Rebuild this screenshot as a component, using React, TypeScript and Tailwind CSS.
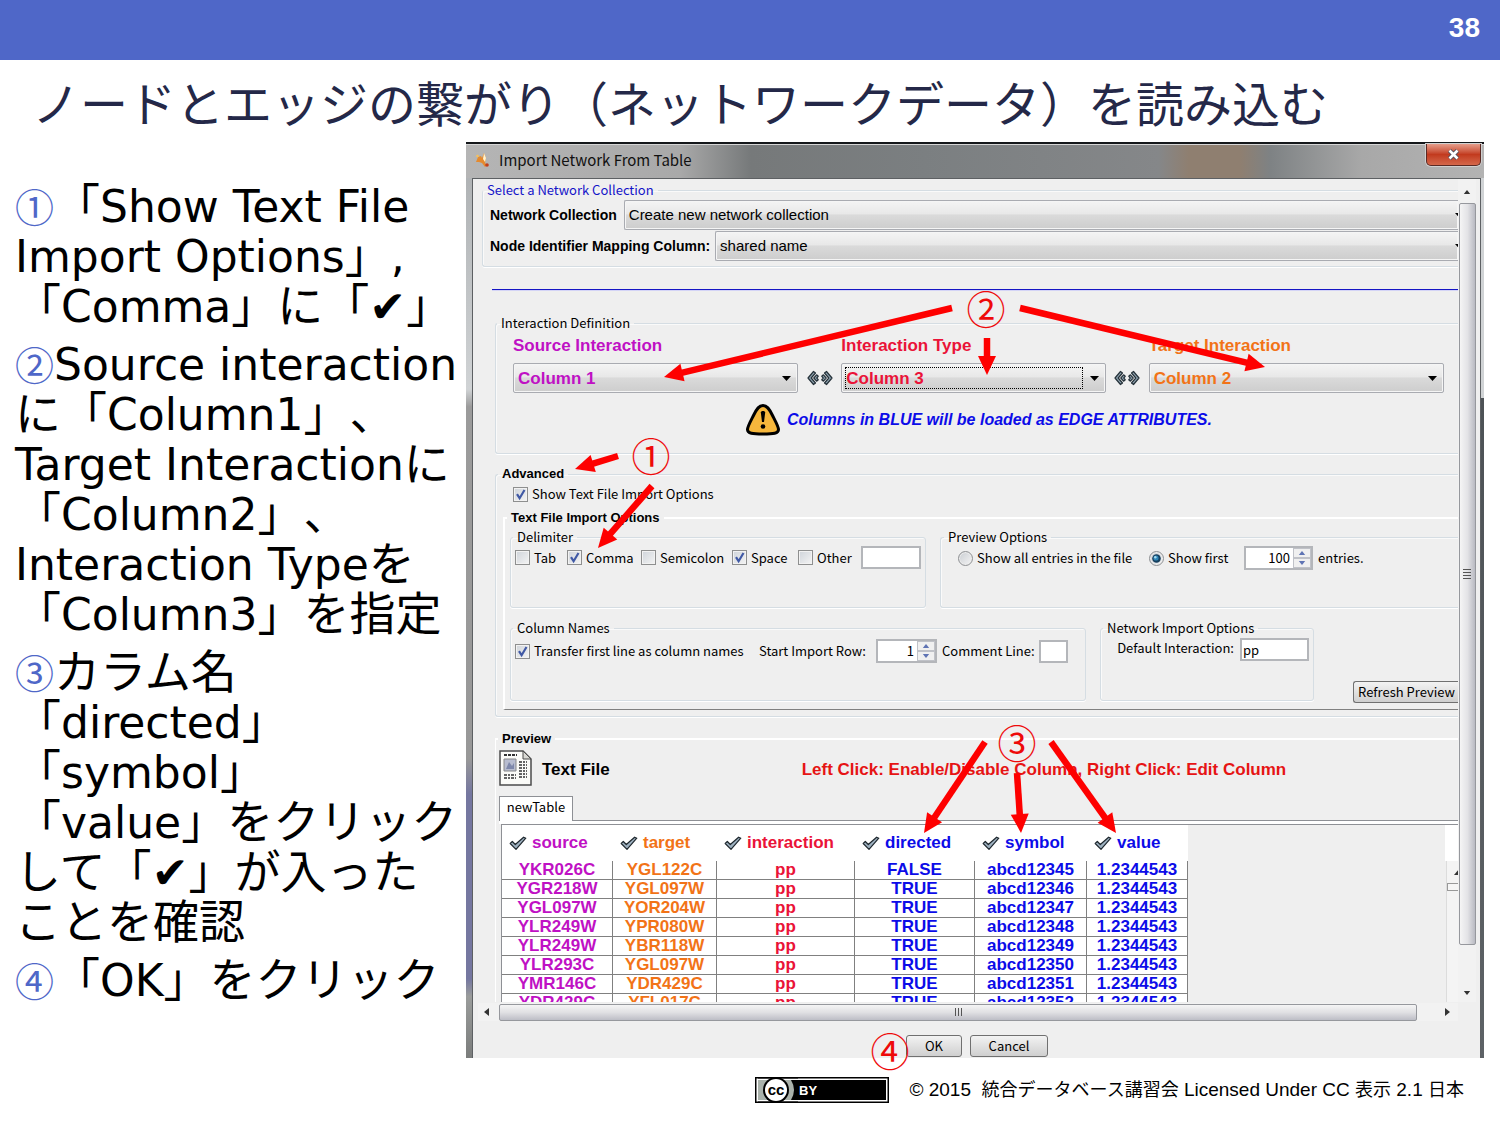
import React from "react";

const UI = "font-['Noto_Sans_CJK_JP','Noto_Sans',sans-serif]";
const ARIAL = "font-['Liberation_Sans',Arial,sans-serif]";

function Group({
  legend,
  legendClass = "ml-[2px]",
  className = "",
  children,
}: {
  legend: string;
  legendClass?: string;
  className?: string;
  children: React.ReactNode;
}) {
  return (
    <fieldset className={"min-w-0 rounded-[3px] border-solid " + className}>
      <legend className={"h-4 px-1 text-[13px] leading-4 whitespace-nowrap " + legendClass}>{legend}</legend>
      {children}
    </fieldset>
  );
}

const etched = "border border-[#d5dde3] shadow-[inset_1px_1px_0_#fafafa,0_1px_0_#fff]";

function Combo({
  label,
  value,
  options,
  className = "",
  focused = false,
  cut = false,
}: {
  label: string;
  value: string;
  options: string[];
  className?: string;
  focused?: boolean;
  cut?: boolean;
}) {
  return (
    <div
      className={
        "relative h-[30px] min-w-0 rounded-[2px] border border-[#a9abb1] bg-[linear-gradient(#f4f4f4,#e8e8e8_46%,#dadada_50%,#cdcdcd)] shadow-[inset_0_0_0_1px_#f5f5f5] " +
        (cut ? "rounded-r-none border-r-0 " : "") +
        className
      }
    >
      <select
        aria-label={label}
        defaultValue={value}
        className={
          "block h-full w-full appearance-none truncate bg-transparent pt-px pl-1 outline-none " +
          (cut ? "pr-1" : "pr-6")
        }
      >
        {options.map((o) => (
          <option key={o}>{o}</option>
        ))}
      </select>
      {focused && (
        <span className="pointer-events-none absolute inset-y-[3px] left-[3px] right-[22px] border border-dotted border-black" />
      )}
      <svg
        className={"pointer-events-none absolute top-[12px] h-[5px] w-[9px] " + (cut ? "-right-[6px]" : "right-[6px]")}
        viewBox="0 0 9 5"
      >
        <path d="M0 0h9L4.5 5z" fill="#000" />
      </svg>
    </div>
  );
}

function Check({ label, checked = false, className = "" }: { label: string; checked?: boolean; className?: string }) {
  return (
    <label className={"flex items-center gap-1 whitespace-nowrap " + className}>
      <span className="relative block h-[15px] w-[15px] shrink-0">
        <input
          type="checkbox"
          defaultChecked={checked}
          className="block h-[15px] w-[15px] appearance-none border border-[#8e8f8f] bg-linear-to-br from-[#cfd4da] to-[#f4f4f4] shadow-[inset_0_0_0_1px_#f2f2f2]"
        />
        {checked && (
          <svg viewBox="0 0 15 15" className="pointer-events-none absolute inset-0">
            <path d="M4 7.2l2.6 4L11.5 3" fill="none" stroke="#4059a5" strokeWidth="2.2" />
          </svg>
        )}
      </span>
      {label}
    </label>
  );
}

function Radio({ label, checked = false, className = "" }: { label: string; checked?: boolean; className?: string }) {
  return (
    <label className={"flex items-center gap-1 whitespace-nowrap " + className}>
      <span className="relative block h-[15px] w-[15px]">
        <input
          type="radio"
          name="entries"
          defaultChecked={checked}
          className="block h-[15px] w-[15px] appearance-none rounded-full border border-[#8e9093] bg-linear-to-br from-[#c9cdd2] to-[#f5f5f5] shadow-[inset_0_0_0_1px_#ededed]"
        />
        {checked && (
          <svg viewBox="0 0 15 15" className="pointer-events-none absolute inset-0">
            <circle cx="7.5" cy="7.5" r="4.3" fill="#17405f" />
            <circle cx="7" cy="7" r="2.6" fill="#2f86b8" />
            <circle cx="6.3" cy="6.2" r="1.2" fill="#a5dcf2" />
          </svg>
        )}
      </span>
      {label}
    </label>
  );
}

function Spinner({ label, value, className }: { label: string; value: string; className: string }) {
  return (
    <div className={"flex h-[24px] border-2 border-[#b4b6ba] bg-white " + className}>
      <input aria-label={label} defaultValue={value} className="w-0 min-w-0 flex-1 bg-white pr-[3px] text-right outline-none" />
      <div className="flex w-[18px] flex-col">
        <button aria-label={label + " up"} className="flex flex-1 items-center justify-center border border-[#c0c2c8] bg-[#f0f0f0]">
          <svg viewBox="0 0 8 5" className="h-1 w-2">
            <path d="M0 5h8L4 0z" fill="#5f74b4" />
          </svg>
        </button>
        <button aria-label={label + " down"} className="flex flex-1 items-center justify-center border border-[#c0c2c8] bg-[#f0f0f0]">
          <svg viewBox="0 0 8 5" className="h-1 w-2">
            <path d="M0 0h8L4 5z" fill="#5f74b4" />
          </svg>
        </button>
      </div>
    </div>
  );
}

function Chevrons() {
  return (
    <>
      <path d="M6.5 1.5l2 1.5L4.2 8l4.300 5-2 1.500L1 8z" />
      <path d="M9.600 4.800l1.700 1.400L9.800 8l1.500 1.800-1.700 1.400L6.800 8z" />
    </>
  );
}

function Exchange() {
  return (
    <svg viewBox="0 0 26 16" className="h-4 w-[26px] justify-self-center">
      <g fill="#8fa3b0" stroke="#26323a" strokeWidth="1.2" strokeLinejoin="round">
        <Chevrons />
        <g transform="matrix(-1 0 0 1 26 0)">
          <Chevrons />
        </g>
      </g>
    </svg>
  );
}

function HeadCheck() {
  return (
    <svg viewBox="0 0 18 15" className="h-[15px] w-[18px] shrink-0">
      <path
        d="M1.200 7.500L3.300 5.500l3 3L14.600 1.200l2.200 1L7 13.300z"
        fill="#9db0bf"
        stroke="#1e272d"
        strokeWidth="1.200"
        strokeLinejoin="round"
      />
    </svg>
  );
}

const columns = [
  { name: "source", head: "text-[#bf11c4]", w: "w-[111px]" },
  { name: "target", head: "text-[#f27317]", w: "w-[104px]" },
  { name: "interaction", head: "text-[#ea1338]", w: "w-[138px]" },
  { name: "directed", head: "text-[#0c0ce8]", w: "w-[120px]" },
  { name: "symbol", head: "text-[#0c0ce8]", w: "w-[112px]" },
  { name: "value", head: "text-[#0c0ce8]", w: "w-[101px]" },
];

const rows = [
  ["YKR026C", "YGL122C", "pp", "FALSE", "abcd12345", "1.2344543"],
  ["YGR218W", "YGL097W", "pp", "TRUE", "abcd12346", "1.2344543"],
  ["YGL097W", "YOR204W", "pp", "TRUE", "abcd12347", "1.2344543"],
  ["YLR249W", "YPR080W", "pp", "TRUE", "abcd12348", "1.2344543"],
  ["YLR249W", "YBR118W", "pp", "TRUE", "abcd12349", "1.2344543"],
  ["YLR293C", "YGL097W", "pp", "TRUE", "abcd12350", "1.2344543"],
  ["YMR146C", "YDR429C", "pp", "TRUE", "abcd12351", "1.2344543"],
  ["YDR429C", "YFL017C", "pp", "TRUE", "abcd12352", "1.2344543"],
];

const arrows: [number, number, number, number][] = [
  [952, 308, 664, 377],
  [1020, 308, 1265, 367],
  [987, 338, 987, 375],
  [618, 456, 575, 469],
  [652, 486, 598, 548],
  [985, 742, 924, 833],
  [1017, 773, 1021, 833],
  [1051, 742, 1116, 833],
];

const marks: [string, number, number][] = [
  ["②", 986, 310],
  ["①", 651, 457],
  ["③", 1017, 744],
  ["④", 890, 1052],
];

function Annotations() {
  return (
    <svg viewBox="466 142 1018 916" className="pointer-events-none absolute -top-[2px] left-0 h-[916px] w-[1018px] overflow-visible">
      {arrows.map(([x1, y1, x2, y2], i) => {
        const d = Math.hypot(x2 - x1, y2 - y1);
        const ux = (x2 - x1) / d;
        const uy = (y2 - y1) / d;
        const bx = x2 - ux * 19;
        const by = y2 - uy * 19;
        return (
          <g key={i} fill="#fe0000" stroke="none">
            <path d={`M${x1} ${y1}L${bx + ux} ${by + uy}`} stroke="#fe0000" strokeWidth="6.500" />
            <path d={`M${x2} ${y2}L${bx - uy * 9} ${by + ux * 9}L${bx + uy * 9} ${by - ux * 9}z`} />
          </g>
        );
      })}
      {marks.map(([m, x, y]) => (
        <text
          key={m}
          x={x}
          y={y + 14}
          textAnchor="middle"
          fill="#ee0a0a"
          className="font-['Noto_Sans_CJK_JP',sans-serif] text-[39px]"
        >
          {m}
        </text>
      ))}
    </svg>
  );
}

const steps = [
  { mark: "①", lines: ["「Show Text File", "Import Options」,", "「Comma」に「✔」"] },
  {
    mark: "②",
    lines: [
      "Source interaction",
      "に「Column1」、",
      "Target Interactionに",
      "「Column2」、",
      "Interaction Typeを",
      "「Column3」を指定",
    ],
  },
  {
    mark: "③",
    lines: ["カラム名", "「directed」", "「symbol」", "「value」をクリック", "して「✔」が入った", "ことを確認"],
  },
  { mark: "④", lines: ["「OK」をクリック"] },
];

/* Japanese runs are set slightly larger than the Latin text beside them. */
function Line({ text }: { text: string }) {
  return (
    <>
      {text.split(/([\u3000-\u9fff]+)/).map((run, i) =>
        i % 2 ? (
          <span key={i} className="text-[46px] leading-none">
            {run}
          </span>
        ) : (
          run
        ),
      )}
    </>
  );
}

function Item({ mark, lines }: { mark: string; lines: string[] }) {
  return (
    <li>
      <span className="font-['Noto_Sans_CJK_JP',sans-serif] text-[39px] leading-none text-[#4f67c8]">{mark}</span>
      {lines.map((l, i) => (
        <React.Fragment key={l}>
          {i > 0 && <br />}
          <Line text={l} />
        </React.Fragment>
      ))}
    </li>
  );
}

function Dialog() {
  return (
    <section
      aria-label="Import Network From Table"
      className="relative flex min-w-0 flex-1 flex-col self-start border-t-2 border-[#14171a] bg-[#999b9d]"
    >
      <header className="flex h-[34px] items-start bg-[linear-gradient(90deg,#b5b5b5,#a9a9a9_21%,#76797a_28%,#7b7f81_45%,#858789_68%,#8f7f70_71%,#8f7f70_76%,#7e8284_79%,#a8a8a8_88%,#b3b3b3)] shadow-[inset_0_1px_0_#d6d6d6]">
        <div className={"flex h-8 items-center gap-2 pl-[9px] text-[15px] text-[#111] " + UI}>
          <svg viewBox="0 0 16 16" className="h-4 w-4">
            <path d="M3 5l3-1 1 2 2-5 2 5-1 5 2 2-2 2-3-4-3-1-3 0z" fill="#e58a2e" />
            <path d="M9 1l2 5-1 4-2-3z" fill="#fff3cf" />
            <circle cx="12" cy="13" r="1.800" fill="#c33f1c" />
            <circle cx="2.500" cy="4" r="1.300" fill="#f6c15b" />
          </svg>
          Import Network From Table
        </div>
        <button
          aria-label="Close"
          className="mr-[3px] ml-auto flex h-[22px] w-[55px] items-center justify-center rounded-b-[5px] border border-t-0 border-[#5b2a24] bg-linear-to-b from-[#e59d8b] from-0% via-[#c23a1e] via-50% to-[#d4674a] shadow-[0_0_0_1px_#d0d0d0]"
        >
          <svg viewBox="0 0 13 11" className="h-[11px] w-[13px]">
            <path d="M2.500 1.500l8 8M10.500 1.500l-8 8" stroke="#4c4f5e" strokeWidth="4.400" />
            <path d="M2.500 1.500l8 8M10.500 1.500l-8 8" stroke="#fff" strokeWidth="2.600" />
          </svg>
        </button>
      </header>

      <div className="flex flex-1">
        <div className="w-[6px] shrink-0 bg-[linear-gradient(#b0b3b5,#d0d3d5_24%,#9b9b9b_26%,#989898_66%,#7577a0_70%,#7577a0_91%,#9a9c9b_93%,#7b7d7c)]" />
        <div
          className={
            "min-w-0 flex-1 border border-b-0 border-[#5d6063] bg-[#efefef] pl-px text-[13px] text-black " + UI
          }
        >
          <div className="flex pr-1">
            <div className="min-w-0 flex-1 overflow-hidden pt-[3px]">
              <Group
                legend="Select a Network Collection"
                legendClass="ml-0 text-[#1414c8]"
                className={"ml-2 rounded-r-none border-r-0 " + etched}
              >
                <div className={"pt-[2px] pb-1 pl-[7px] text-[15px] " + ARIAL}>
                  <div className="flex h-[31px] gap-[7px]">
                    <span className="self-center text-[14px] font-bold whitespace-nowrap">Network Collection</span>
                    <Combo
                      cut
                      className="flex-1"
                      label="Network Collection"
                      value="Create new network collection"
                      options={["Create new network collection"]}
                    />
                  </div>
                  <div className="flex h-[31px] gap-[5px]">
                    <span className="self-center text-[14px] font-bold whitespace-nowrap">Node Identifier Mapping Column:</span>
                    <Combo
                      cut
                      className="flex-1"
                      label="Node Identifier Mapping Column"
                      value="shared name"
                      options={["shared name"]}
                    />
                  </div>
                </div>
              </Group>

              <div role="separator" className="mt-[22px] mb-[25px] ml-[18px] h-px bg-[#1414c4] shadow-[0_1px_0_#d4d4f6]" />

              <Group legend="Interaction Definition" legendClass="ml-[1px]" className={"ml-[21px] rounded-r-none border-r-0 " + etched}>
                <div className={"pt-[5px] pr-[14px] pb-4 pl-[17px] text-[17px] font-bold " + ARIAL}>
                  <div className="grid grid-cols-[286fr_43px_265fr_43px_296fr] leading-5">
                    <span className="text-[#bf11c4]">Source Interaction</span>
                    <span />
                    <span className="text-[#ea1338]">Interaction Type</span>
                    <span />
                    <span className="text-[#f27317]">Target Interaction</span>
                  </div>
                  <div className="mt-[7px] grid grid-cols-[286fr_43px_265fr_43px_296fr] items-center">
                    <Combo
                      className="text-[#bf11c4]"
                      label="Source Interaction"
                      value="Column 1"
                      options={["Column 1", "Column 2", "Column 3"]}
                    />
                    <Exchange />
                    <Combo
                      focused
                      className="text-[#ea1338]"
                      label="Interaction Type"
                      value="Column 3"
                      options={["Column 1", "Column 2", "Column 3"]}
                    />
                    <Exchange />
                    <Combo
                      className="text-[#f27317]"
                      label="Target Interaction"
                      value="Column 2"
                      options={["Column 1", "Column 2", "Column 3"]}
                    />
                  </div>
                  <div className="mt-[10px] flex items-center justify-center gap-[6px]">
                    <svg viewBox="0 0 36 34" className="h-[34px] w-9">
                      <path
                        d="M18 2.500c4 0 6 3 9 9s6.500 12 6.500 15c0 4-5 4.500-15.500 4.500S2.500 30.500 2.500 26.500c0-3 3.500-9 6.500-15s5-9 9-9z"
                        fill="#f6b73c"
                        stroke="#000"
                        strokeWidth="3"
                      />
                      <path d="M15.800 9.500c0-2 4.400-2 4.400 0l-1.200 9.500h-2z" />
                      <circle cx="18" cy="23.500" r="2.300" />
                    </svg>
                    <em className="text-[16px] whitespace-nowrap text-[#0c0ce8]">
                      Columns in BLUE will be loaded as EDGE ATTRIBUTES.
                    </em>
                  </div>
                </div>
              </Group>

              <Group
                legend="Advanced"
                legendClass={"ml-[2px] text-[13px] font-bold " + ARIAL}
                className={"mt-[12px] ml-[21px] rounded-r-none border-r-0 " + etched}
              >
                <div className="pt-[3px] pb-[6px] pl-[7px]">
                  <Check label="Show Text File Import Options" checked className="h-[18px] pl-[10px]" />
                  <Group
                    legend="Text File Import Options"
                    legendClass={"ml-[2px] text-[13px] font-bold " + ARIAL}
                    className="mt-[7px] rounded-none border-2 border-r-0 border-b border-white border-b-[#808080]"
                  >
                    <div className="pt-[3px] pb-2 pl-[5px]">
                      <div className="flex gap-[14px]">
                        <Group legend="Delimiter" className={"w-[416px] shrink-0 " + etched}>
                          <div className="flex items-center pt-px pr-1 pb-[38px] pl-1">
                            <Check label="Tab" className="w-[52px]" />
                            <Check label="Comma" checked className="w-[74px]" />
                            <Check label="Semicolon" className="w-[91px]" />
                            <Check label="Space" checked className="w-[66px]" />
                            <Check label="Other" />
                            <input
                              aria-label="Other delimiter"
                              className="ml-auto h-[23px] w-[60px] border-2 border-[#b4b6ba] bg-white outline-none"
                            />
                          </div>
                        </Group>
                        <Group legend="Preview Options" legendClass="ml-[3px]" className={"flex-1 rounded-r-none border-r-0 " + etched}>
                          <div className="flex items-center pt-px pb-[37px] pl-[17px]">
                            <Radio label="Show all entries in the file" className="w-[191px]" />
                            <Radio label="Show first" checked className="w-[95px]" />
                            <Spinner label="Entries" value="100" className="w-[69px]" />
                            <span className="ml-[5px]">entries.</span>
                          </div>
                        </Group>
                      </div>
                      <div className="mt-3 flex gap-[14px]">
                        <Group legend="Column Names" className={"w-[576px] shrink-0 " + etched}>
                          <div className="flex items-center pt-[3px] pb-[37px] pl-1 whitespace-nowrap">
                            <Check label="Transfer first line as column names" checked className="w-[244px]" />
                            <span className="w-[117px]">Start Import Row:</span>
                            <Spinner label="Start Import Row" value="1" className="w-[61px]" />
                            <label className="ml-[5px] flex items-center gap-1">
                              Comment Line:
                              <input className="h-[23px] w-[29px] border-2 border-[#b4b6ba] bg-white outline-none" />
                            </label>
                          </div>
                        </Group>
                        <Group legend="Network Import Options" className={"w-[214px] shrink-0 " + etched}>
                          <label className="flex justify-end gap-[6px] pt-[2px] pr-1 pb-[39px] whitespace-nowrap">
                            Default Interaction:
                            <input
                              defaultValue="pp"
                              className="h-[23px] w-[69px] border-2 border-[#b4b6ba] bg-white px-px outline-none"
                            />
                          </label>
                        </Group>
                        <button className="-mb-[2px] ml-auto h-[22px] self-end rounded-l-[3px] border border-r-0 border-[#707070] bg-linear-to-b from-[#f3f3f3] to-[#cfcfcf] pr-[3px] pl-1 leading-[18px] whitespace-nowrap">
                          Refresh Preview
                        </button>
                      </div>
                    </div>
                  </Group>
                </div>
              </Group>

              <Group
                legend="Preview"
                legendClass={"ml-[2px] text-[13px] font-bold " + ARIAL}
                className="mt-[14px] ml-[21px] rounded-none border-t-2 border-l border-white"
              >
                <div className={"flex items-center pt-[3px] pl-[3px] text-[17px] leading-6 font-bold " + ARIAL}>
                  <svg viewBox="0 0 33 36" className="h-9 w-[33px]">
                    <path d="M1 1h23l8 8v26H1z" fill="#fbfbf8" stroke="#4c4c4c" strokeWidth="1.500" />
                    <path d="M24 1v8h8z" fill="#d9d9d4" stroke="#4c4c4c" />
                    <path d="M5 5h13" stroke="#333" strokeWidth="2" strokeDasharray="3 1" />
                    <path d="M5 9h12v12H5z" fill="#b8bdd0" stroke="#888" />
                    <path d="M7 19l3-7 3 4 2-3v6z" fill="#7e88ab" />
                    <path d="M20 12h8M20 15h8M20 18h8M20 21h8M20 24h8M20 27h8M5 25h12M5 28h12" stroke="#333" strokeWidth="1.300" strokeDasharray="3 1 2 1" />
                  </svg>
                  <span className="pt-1 pl-[10px]">Text File</span>
                  <span className="pt-1 pl-[192px] whitespace-nowrap text-[#e61414]">
                    Left Click: Enable/Disable Column, Right Click: Edit Column
                  </span>
                </div>
                <div className="mt-[10px] flex pl-[3px]">
                  <button className="h-[25px] w-[74px] border border-b-0 border-[#8e9095] bg-white pb-1">newTable</button>
                  <div className="flex-1 border-b border-[#8e9095]" />
                </div>
                <div className="ml-[3px] h-[3px] bg-white" />
                <div className="ml-[5px] flex h-[178px] overflow-hidden border-t border-l border-[#8e9095]">
                  <table className={"w-[686px] table-fixed border-separate border-spacing-0 text-[17px] font-bold " + ARIAL}>
                    <thead>
                      <tr className="h-9 bg-white">
                        {columns.map((c) => (
                          <th key={c.name} className={"p-0 font-bold " + c.w + " " + c.head}>
                            <span className="flex items-center gap-[5px] pl-[7px]">
                              <HeadCheck />
                              {c.name}
                            </span>
                          </th>
                        ))}
                      </tr>
                    </thead>
                    <tbody>
                      {rows.map((r, i) => (
                        <tr key={i} className="bg-white">
                          {r.map((v, j) => (
                            <td
                              key={j}
                              className={
                                "h-[19px] border-r border-b border-[#808080] p-0 text-center leading-[18px] " + columns[j].head
                              }
                            >
                              {v}
                            </td>
                          ))}
                        </tr>
                      ))}
                    </tbody>
                  </table>
                  <div className="flex-1" />
                  <div className="w-[13px]">
                    <div className="h-9 bg-white" />
                    <div className="ml-px h-full border-l border-[#dcdcdc] bg-[#f4f4f4] pt-2 pl-[7px]">
                      <svg viewBox="0 0 5 6" className="h-[6px] w-[5px]">
                        <path d="M0 6L5 0v6z" fill="#333" />
                      </svg>
                      <div className="mt-2 -ml-[7px] h-2 border border-r-0 border-[#999] bg-[#f6f6f6]" />
                    </div>
                  </div>
                </div>
              </Group>
            </div>

            <div className="flex w-[18px] shrink-0 flex-col items-center bg-[#f2f2f2] pt-[11px] pb-[7px]">
              <svg viewBox="0 0 8 5" className="h-1 w-2">
                <path d="M0 5h8L4 0z" fill="#333" />
              </svg>
              <div className="mt-[9px] mb-[46px] flex w-[17px] flex-1 flex-col items-center justify-center gap-[2px] rounded-[2px] border border-[#96989d] bg-linear-to-r from-[#f5f5f5] via-[#e3e3e6] to-[#b9bac2]">
                <span className="h-px w-2 bg-[#555]" />
                <span className="h-px w-2 bg-[#555]" />
                <span className="h-px w-2 bg-[#555]" />
                <span className="h-px w-2 bg-[#555]" />
              </div>
              <svg viewBox="0 0 8 5" className="h-1 w-2">
                <path d="M0 0h8L4 5z" fill="#333" />
              </svg>
            </div>
          </div>

          <div className="mt-px mr-[22px] ml-1 flex h-[18px] items-center bg-[#f2f2f2] pl-[6px]">
            <svg viewBox="0 0 5 8" className="h-2 w-[5px]">
              <path d="M5 0v8L0 4z" fill="#333" />
            </svg>
            <div className="ml-[10px] flex h-[17px] flex-1 items-center justify-center gap-[2px] rounded-[2px] border border-[#96989d] bg-linear-to-b from-[#f5f5f5] via-[#e0e0e3] to-[#bdbec6]">
              <span className="h-2 w-px bg-[#555]" />
              <span className="h-2 w-px bg-[#555]" />
              <span className="h-2 w-px bg-[#555]" />
            </div>
            <svg viewBox="0 0 5 8" className="mr-2 ml-7 h-2 w-[5px]">
              <path d="M0 0v8l5-4z" fill="#333" />
            </svg>
          </div>

          <div className="mt-[14px] flex justify-center gap-2 pb-px">
            <button className="h-[22px] w-14 rounded-[3px] border border-[#707070] bg-linear-to-b from-[#f3f3f3] to-[#cfcfcf] leading-[18px]">
              OK
            </button>
            <button className="h-[22px] w-[78px] rounded-[3px] border border-[#707070] bg-linear-to-b from-[#f3f3f3] to-[#cfcfcf] leading-[18px]">
              Cancel
            </button>
          </div>
        </div>
        <div className="w-[3px] shrink-0 bg-[linear-gradient(#d0d3d5,#d0d3d5_25%,#4d5256_25%,#5d6266)]" />
      </div>
      <Annotations />
    </section>
  );
}

export default function App() {
  return (
    <div className="min-h-screen bg-white text-black">
      <div className={"flex h-[60px] items-center justify-end bg-[#4f67c8] pr-5 pb-1 text-[28px] font-bold text-white " + ARIAL}>
        38
      </div>
      <h1 className="pt-1 pb-1 pl-[32px] text-[48px] leading-[74px] whitespace-nowrap text-[#242848] font-['Noto_Sans_CJK_JP',sans-serif]">
        ノードとエッジの繋がり（ネットワークデータ）を読み込む
      </h1>
      <main className="flex pr-4">
        <ul className="flex w-[466px] shrink-0 flex-col gap-2 pt-[40px] pl-[15px] text-[44px] leading-[50px] whitespace-nowrap [text-spacing-trim:space-all] font-['DejaVu_Sans','Noto_Sans_CJK_JP',sans-serif]">
          {steps.map((s) => (
            <Item key={s.mark} mark={s.mark} lines={s.lines} />
          ))}
        </ul>
        <Dialog />
      </main>
      <footer className={"flex items-center justify-end gap-5 pt-[18px] pr-9 text-[19px] leading-[28px] " + ARIAL}>
        <svg viewBox="0 0 134 26" className="h-[26px] w-[134px]" role="img" aria-label="CC BY">
          <path d="M0 0h134v26H0z" fill="#000" />
          <path d="M1.500 1.500h131v23h-131z" fill="#fff" />
          <path d="M3 3h128v20H3z" fill="#000" />
          <path d="M3 3h33q6 10 0 20H3z" fill="#aab2ab" />
          <circle cx="21" cy="13" r="13" fill="#000" />
          <circle cx="21" cy="13" r="11" fill="#fff" />
          <path d="M3 0h40v1.500H3zM3 24.500h40V26H3z" fill="#000" />
          <text x="21" y="18" textAnchor="middle" fontSize="15" fontWeight="700">
            cc
          </text>
          <text x="44" y="18" fontSize="13" fontWeight="700" fill="#fff">
            BY
          </text>
        </svg>
        <p className="whitespace-pre font-['Liberation_Sans','Noto_Sans_CJK_JP',sans-serif]">
          © 2015{"  "}
          <span className="text-[18px]">統合データベース講習会</span> Licensed Under CC <span className="text-[18px]">表示</span> 2.1{" "}
          <span className="text-[18px]">日本</span>
        </p>
      </footer>
    </div>
  );
}
